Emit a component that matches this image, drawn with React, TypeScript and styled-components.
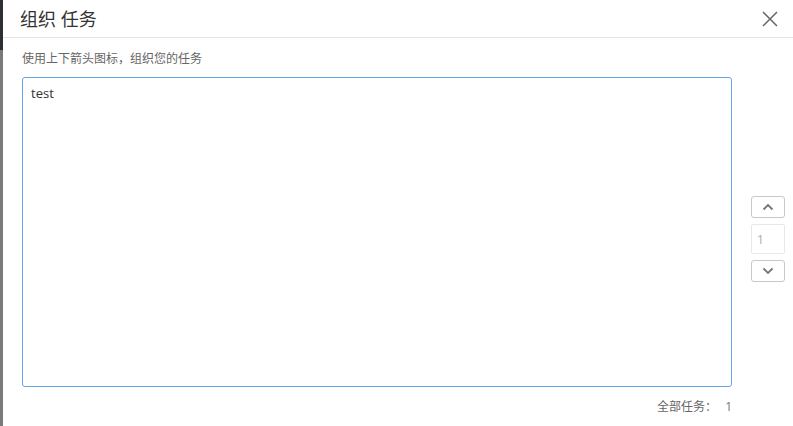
import React from 'react';
import styled, { createGlobalStyle } from 'styled-components';

const GlobalStyle = createGlobalStyle`
  html, body {
    margin: 0;
    padding: 0;
    background: #fff;
  }
  body {
    font-family: "Open Sans", "Noto Sans CJK SC", sans-serif;
  }
`;

const ChevronUp = () => (
  <svg width="12" height="8" viewBox="0 0 12 8">
    <path d="M1.5 6.5 L6 2 L10.5 6.5" fill="none" stroke="#777" strokeWidth="1.8" />
  </svg>
);

const ChevronDown = () => (
  <svg width="12" height="8" viewBox="0 0 12 8">
    <path d="M1.5 1.5 L6 6 L10.5 1.5" fill="none" stroke="#777" strokeWidth="1.8" />
  </svg>
);

export default function App(): JSX.Element {
  return (
    <>
      <GlobalStyle />
      <Page>
        <Backdrop />
        <Dialog>
          <Header>
            <Title>组织 任务</Title>
            <CloseButton aria-label="close">
              <svg width="16" height="16" viewBox="0 0 16 16">
                <path d="M1 1 L15 15 M15 1 L1 15" stroke="#666" strokeWidth="1.5" />
              </svg>
            </CloseButton>
          </Header>
          <Body>
            <Hint>使用上下箭头图标，组织您的任务</Hint>
            <Row>
              <TaskList>
                <TaskItem>test</TaskItem>
              </TaskList>
              <Controls>
                <ArrowButton>
                  <ChevronUp />
                </ArrowButton>
                <PositionInput value="1" readOnly />
                <ArrowButton>
                  <ChevronDown />
                </ArrowButton>
              </Controls>
            </Row>
            <Footer>
              全部任务：<Count>1</Count>
            </Footer>
          </Body>
        </Dialog>
      </Page>
    </>
  );
}

const Page = styled.div`
  display: flex;
  width: 793px;
  height: 426px;
  overflow: hidden;
`;

const Backdrop = styled.div`
  width: 3px;
  flex-shrink: 0;
  background: linear-gradient(to bottom, #2c3035 0, #2c3035 50px, #7a7a7a 50px, #7a7a7a 100%);
`;

const Dialog = styled.div`
  flex: 1;
  background: #fff;
  display: flex;
  flex-direction: column;
`;

const Header = styled.div`
  height: 38px;
  border-bottom: 1px solid #e5e5e5;
  display: flex;
  align-items: center;
  justify-content: space-between;
  padding: 0 16px 0 17px;
  box-sizing: border-box;
`;

const Title = styled.h4`
  margin: 0;
  font-size: 18px;
  font-weight: 400;
  color: #333;
  line-height: 1;
`;

const CloseButton = styled.button`
  border: none;
  background: none;
  padding: 0;
  width: 16px;
  height: 16px;
  display: flex;
  cursor: pointer;
`;

const Body = styled.div`
  padding: 12px 9px 0 19px;
  display: flex;
  flex-direction: column;
`;

const Hint = styled.p`
  margin: 0 0 9px;
  font-size: 12px;
  line-height: 18px;
  color: #666;
`;

const Row = styled.div`
  display: flex;
  align-items: flex-start;
  gap: 19px;
`;

const TaskList = styled.div`
  width: 710px;
  height: 310px;
  box-sizing: border-box;
  border: 1px solid #66a4ea;
  border-radius: 3px;
  padding: 6px 8px;
`;

const TaskItem = styled.div`
  font-size: 13px;
  line-height: 18px;
  color: #333;
`;

const Controls = styled.div`
  margin-top: 119px;
  display: flex;
  flex-direction: column;
  gap: 6px;
`;

const ArrowButton = styled.button`
  width: 34px;
  height: 22px;
  padding: 0;
  border: 1px solid #c8c8c8;
  border-radius: 3px;
  background: #fff;
  display: flex;
  align-items: center;
  justify-content: center;
`;

const PositionInput = styled.input`
  width: 34px;
  height: 30px;
  box-sizing: border-box;
  border: 1px solid #e8e8e8;
  border-radius: 2px;
  padding: 0 5px;
  font-family: "Open Sans", sans-serif;
  font-size: 12px;
  color: #aaa;
  outline: none;
`;

const Footer = styled.div`
  margin-top: 12px;
  width: 710px;
  text-align: right;
  font-size: 12px;
  line-height: 16px;
  color: #666;
  padding-right: 0;
  box-sizing: border-box;
`;

const Count = styled.span`
  margin-left: 8px;
  color: #777;
`;
